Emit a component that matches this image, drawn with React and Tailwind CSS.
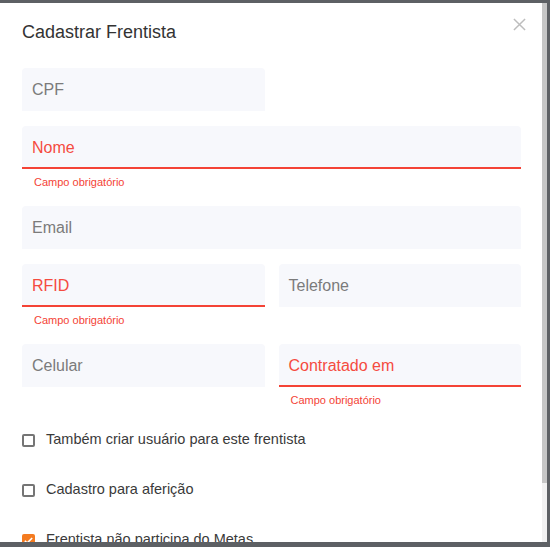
import React from 'react';

function Field({ label, error, className = '' }) {
  return (
    <div className={className}>
      <div
        className={`h-[43px] rounded-t-[4px] bg-[#f7f8fc] flex items-center px-[10px] text-[16px] ${
          error ? 'border-b-2 border-[#f44336] text-[#f54b40] pt-[3px]' : 'text-[#7b7b7b]'
        }`}
      >
        {label}
      </div>
      {error && (
        <p className="h-[22px] pt-[6px] pl-[12px] text-[11px] leading-[14px] text-[#f44336]">Campo obrigatório</p>
      )}
    </div>
  );
}

function Check({ label, checked }) {
  return (
    <label className="h-[50px] flex items-center gap-[11px] text-[14.5px] text-[#3a3a3a]">
      {checked ? (
        <span className="w-[13px] h-[13px] rounded-[2px] bg-[#f47b20] flex items-center justify-center">
          <svg viewBox="0 0 24 24" className="w-[11px] h-[11px]" fill="none" stroke="white" strokeWidth="3.5">
            <path d="M4 12.5l5 5L20 6.5" />
          </svg>
        </span>
      ) : (
        <span className="w-[13px] h-[13px] rounded-[2px] border-2 border-[#757575]" />
      )}
      {label}
    </label>
  );
}

export default function App() {
  return (
    <div className="h-[547px] w-[550px] bg-[#5d6064] pt-[3px] overflow-hidden" style={{ fontFamily: '"Liberation Sans", Arial, sans-serif' }}>
      <div className="w-[547px] h-[539px] flex bg-white overflow-hidden">
        <div className="relative flex-1 px-[22px] overflow-hidden">
          <h2 className="pt-[18px] text-[18px] leading-[22px] text-[#333]">Cadastrar Frentista</h2>
          <button className="absolute right-[16px] top-[15px] text-[#bdbdbd]">
            <svg viewBox="0 0 14 14" className="w-[13px] h-[13px]" stroke="currentColor" strokeWidth="1.6">
              <path d="M1 1l12 12M13 1L1 13" />
            </svg>
          </button>

          <div className="w-[499px] mt-[25px] grid grid-cols-2 gap-x-[14px] gap-y-[15px] items-start">
            <Field label="CPF" />
            <div />
            <Field label="Nome" error className="col-span-2" />
            <Field label="Email" className="col-span-2" />
            <Field label="RFID" error />
            <Field label="Telefone" />
            <Field label="Celular" />
            <Field label="Contratado em" error />
          </div>

          <div className="mt-[6px]">
            <Check label="Também criar usuário para este frentista" />
            <Check label="Cadastro para aferição" />
            <Check label="Frentista não participa do Metas" checked />
          </div>
        </div>
        <div className="w-[5px] flex flex-col bg-[#f1f1f1]">
          <div className="h-[480px] bg-[#c6c6c6]" />
        </div>
      </div>
    </div>
  );
}
